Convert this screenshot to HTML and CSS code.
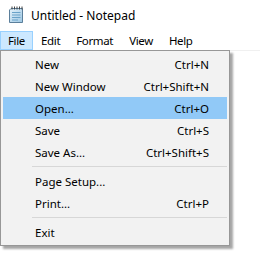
FILE: index.html
```html
<!DOCTYPE html>
<html>
<head>
<meta charset="utf-8">
<link rel="stylesheet" href="styles.css">
</head>
<body>
<div class="window">
  <div class="titlebar">
    <svg class="app-icon" width="16" height="17" viewBox="0 0 16 17">
      <defs>
        <linearGradient id="pg" x1="0" y1="0" x2="1" y2="1">
          <stop offset="0" stop-color="#e6f3fb"/>
          <stop offset="1" stop-color="#9cc6e2"/>
        </linearGradient>
      </defs>
      <path d="M3 2.5 H14.5 V16.5 H1.5 V4 Z" fill="url(#pg)" stroke="#5b7f9b" stroke-width="1"/>
      <path d="M4 6.5 H12.5 M4 9 H12.5 M4 11.5 H12.5 M4 14 H10" stroke="#6aa3c9" stroke-width="1"/>
      <path d="M4 0.5 V3.5 M6.5 0.5 V3.5 M9 0.5 V3.5 M11.5 0.5 V3.5 M14 0.5 V3.5" stroke="#444" stroke-width="1"/>
    </svg>
    <span class="title">Untitled - Notepad</span>
  </div>
  <div class="menubar">
    <span class="mb-item active">File</span>
    <span class="mb-item">Edit</span>
    <span class="mb-item">Format</span>
    <span class="mb-item">View</span>
    <span class="mb-item">Help</span>
  </div>
  <div class="editor"></div>

  <div class="menu">
    <div class="mi"><span>New</span><span class="sc">Ctrl+N</span></div>
    <div class="mi"><span>New Window</span><span class="sc">Ctrl+Shift+N</span></div>
    <div class="mi hl"><span>Open...</span><span class="sc">Ctrl+O</span></div>
    <div class="mi"><span>Save</span><span class="sc">Ctrl+S</span></div>
    <div class="mi"><span>Save As...</span><span class="sc">Ctrl+Shift+S</span></div>
    <div class="sep"></div>
    <div class="mi"><span>Page Setup...</span><span class="sc"></span></div>
    <div class="mi"><span>Print...</span><span class="sc">Ctrl+P</span></div>
    <div class="sep"></div>
    <div class="mi"><span>Exit</span><span class="sc"></span></div>
  </div>
</div>
</body>
</html>
```

FILE: styles.css
```css
html, body {
  margin: 0;
  padding: 0;
  background: #ffffff;
}
body {
  font-family: "Noto Sans", "Open Sans", sans-serif;
  font-size: 11.5px;
  color: #000;
  width: 260px;
  height: 260px;
  overflow: hidden;
}
.window {
  position: relative;
  width: 260px;
  height: 260px;
  display: flex;
  flex-direction: column;
}
.titlebar {
  height: 31px;
  display: flex;
  align-items: center;
  padding-left: 8px;
  box-sizing: border-box;
}
.app-icon {
  margin-right: 7px;
  margin-top: -3px;
}
.title {
  line-height: 16px;
  font-size: 12px;
}
.menubar {
  height: 19px;
  display: flex;
}
.mb-item {
  padding: 0 7px;
  line-height: 17px;
  border: 1px solid transparent;
  letter-spacing: -0.35px;
}
.mb-item.active {
  background: #cce8ff;
  border-color: #99d1ff;
}
.editor {
  flex: 1;
  border-top: 1px solid #f0f0f0;
}
.menu {
  position: absolute;
  left: 0;
  top: 50px;
  width: 230px;
  box-sizing: border-box;
  background: #f2f2f2;
  border: 1px solid #979797;
  padding: 2px;
  box-shadow: 3px 3px 2px rgba(0,0,0,0.35);
}
.mi {
  height: 22px;
  display: flex;
  align-items: center;
  justify-content: space-between;
  padding: 0 18px 0 32px;
}
.mi.hl {
  background: #91c9f7;
}
.sep {
  height: 1px;
  background: #d7d7d7;
  margin: 3px 0 3px 29px;
}
```
